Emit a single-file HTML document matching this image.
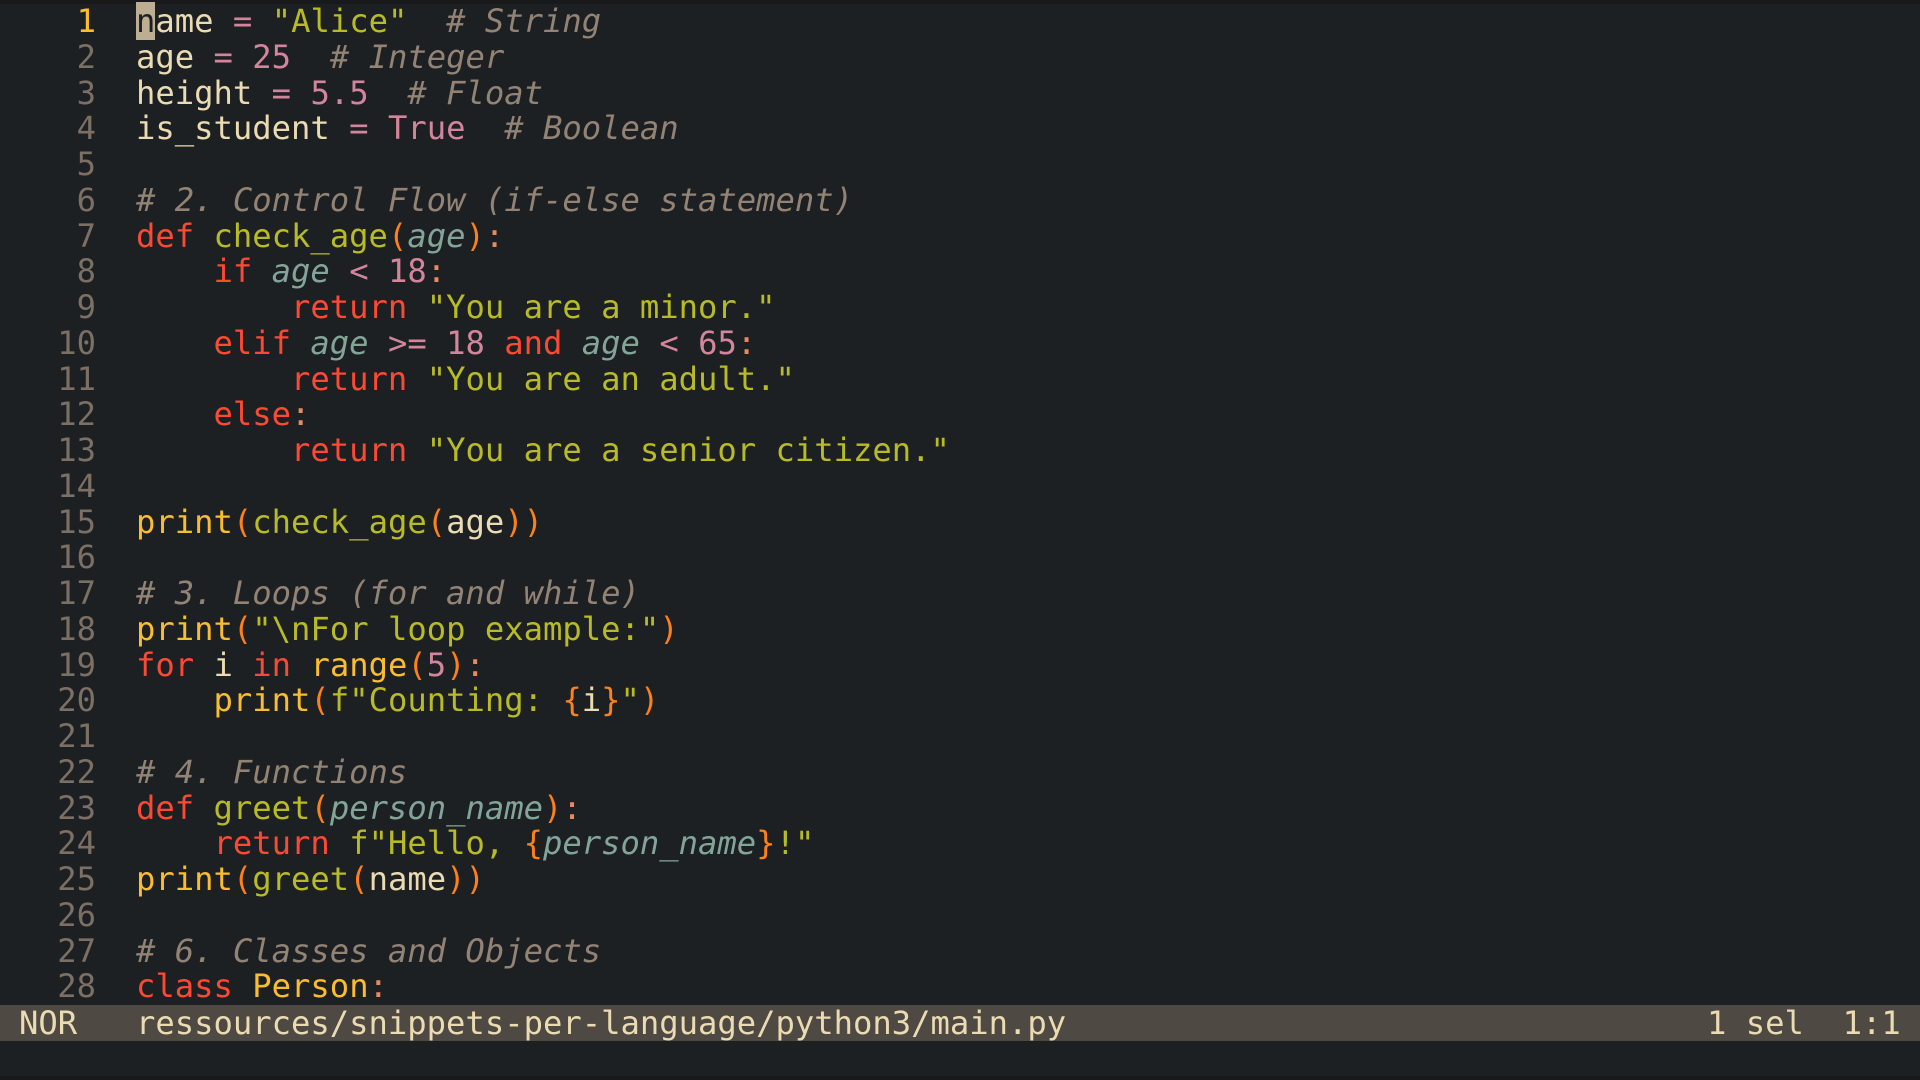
<!DOCTYPE html>
<html><head><meta charset="utf-8"><style>
html,body{margin:0;padding:0;width:1920px;height:1080px;overflow:hidden;background:#1d2023;}
body{font-family:"DejaVu Sans Mono","Liberation Mono",monospace;font-size:32.2px;color:#ebdbb2;}
.top{position:absolute;left:0;top:0;width:1920px;height:4px;background:#17191b;}
.ln{position:absolute;left:0;width:96px;text-align:right;color:#7c6f64;white-space:pre;line-height:35.75px;}
.code{position:absolute;left:136px;white-space:pre;line-height:35.75px;}
.k{color:#fb4934}.s{color:#b8bb26}.c{color:#928374;font-style:italic}.n{color:#d3869b}
.b{color:#fabd2f}.g{color:#b8bb26}.p{color:#fe8019}.v{color:#83a598;font-style:italic}.o{color:#d3869b}.col{color:#e98a5e}
.cur{background:#bdae93;color:#1d2023}
.bar{position:absolute;left:0;top:1005px;width:1920px;height:36px;background:#4f4943;line-height:36px;white-space:pre;color:#ebdbb2;}
.bot{position:absolute;left:0;top:1076px;width:1920px;height:4px;background:#17191b;}
</style></head><body>
<div class="top"></div>
<div class="ln" style="top:4px"><span style="color:#fabd2f">1</span>
2
3
4
5
6
7
8
9
10
11
12
13
14
15
16
17
18
19
20
21
22
23
24
25
26
27
28</div>
<div class="code" style="top:4px"><span class="cur">n</span>ame <span class="o">=</span> <span class="s">"Alice"</span>  <span class="c"># String</span>
age <span class="o">=</span> <span class="n">25</span>  <span class="c"># Integer</span>
height <span class="o">=</span> <span class="n">5.5</span>  <span class="c"># Float</span>
is_student <span class="o">=</span> <span class="n">True</span>  <span class="c"># Boolean</span>

<span class="c"># 2. Control Flow (if-else statement)</span>
<span class="k">def</span> <span class="g">check_age</span><span class="p">(</span><span class="v">age</span><span class="p">)</span><span class="col">:</span>
    <span class="k">if</span> <span class="v">age</span> <span class="o">&lt;</span> <span class="n">18</span><span class="col">:</span>
        <span class="k">return</span> <span class="s">"You are a minor."</span>
    <span class="k">elif</span> <span class="v">age</span> <span class="o">&gt;=</span> <span class="n">18</span> <span class="k">and</span> <span class="v">age</span> <span class="o">&lt;</span> <span class="n">65</span><span class="col">:</span>
        <span class="k">return</span> <span class="s">"You are an adult."</span>
    <span class="k">else</span><span class="col">:</span>
        <span class="k">return</span> <span class="s">"You are a senior citizen."</span>

<span class="b">print</span><span class="p">(</span><span class="g">check_age</span><span class="p">(</span>age<span class="p">))</span>

<span class="c"># 3. Loops (for and while)</span>
<span class="b">print</span><span class="p">(</span><span class="s">"\nFor loop example:"</span><span class="p">)</span>
<span class="k">for</span> i <span class="k">in</span> <span class="b">range</span><span class="p">(</span><span class="n">5</span><span class="p">)</span><span class="col">:</span>
    <span class="b">print</span><span class="p">(</span><span class="s">f"Counting: </span><span class="p">{</span>i<span class="p">}</span><span class="s">"</span><span class="p">)</span>

<span class="c"># 4. Functions</span>
<span class="k">def</span> <span class="g">greet</span><span class="p">(</span><span class="v">person_name</span><span class="p">)</span><span class="col">:</span>
    <span class="k">return</span> <span class="s">f"Hello, </span><span class="p">{</span><span class="v">person_name</span><span class="p">}</span><span class="s">!"</span>
<span class="b">print</span><span class="p">(</span><span class="g">greet</span><span class="p">(</span>name<span class="p">))</span>

<span class="c"># 6. Classes and Objects</span>
<span class="k">class</span> <span class="b">Person</span><span class="col">:</span></div>
<div class="bar"><span style="position:absolute;left:19px">NOR</span><span style="position:absolute;left:136px">ressources/snippets-per-language/python3/main.py</span><span style="position:absolute;left:1707px">1 sel  1:1</span></div>
<div class="bot"></div>
</body></html>
